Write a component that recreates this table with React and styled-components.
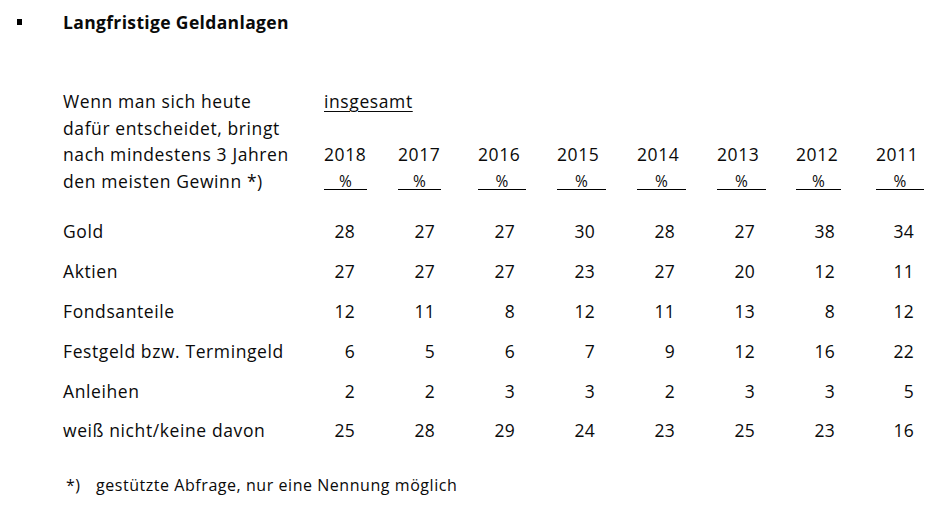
import React from 'react';
import styled, { createGlobalStyle } from 'styled-components';

const GlobalStyle = createGlobalStyle`
  body {
    margin: 0;
    background: #fff;
    color: #0a0a0a;
    font-family: "Open Sans", "Liberation Sans", sans-serif;
  }
`;

const COLS = '261px 74px 80px 79px 80px 80px 79px 80px 60px';

const Page = styled.div`
  width: 951px;
  height: 511px;
  padding: 8px 0 0 17px;
  box-sizing: border-box;
  overflow: hidden;
`;

const TitleRow = styled.div`
  display: flex;
  align-items: center;
  height: 28px;
`;

const Bullet = styled.span`
  width: 5px;
  height: 6px;
  background: #000;
  margin-right: 41px;
`;

const Title = styled.h1`
  margin: 0;
  font-size: 17.5px;
  font-weight: 700;
  letter-spacing: 0.35px;
`;

const Table = styled.div`
  margin: 52px 0 0 46px;
  display: grid;
  grid-template-columns: ${COLS};
  grid-template-rows: repeat(4, 26.6px) 18px repeat(6, 39.8px);
  font-size: 17.5px;
  letter-spacing: 0.6px;
`;

const HeaderLabel = styled.div`
  grid-row: 1 / span 4;
  line-height: 26.6px;
  white-space: nowrap;
`;

const Overall = styled.div`
  grid-column: 2 / span 8;
  grid-row: 1;
  line-height: 26.6px;
  text-decoration: underline;
  text-underline-offset: 3px;
  text-decoration-thickness: 1px;
`;

const Year = styled.div`
  grid-row: 3;
  line-height: 26.6px;
`;

const Unit = styled.div`
  grid-row: 4;
  align-self: start;
  width: ${(p) => p.$w}px;
  height: 21px;
  line-height: 26px;
  font-size: 15.5px;
  letter-spacing: 0;
  text-align: center;
  border-bottom: 1px solid #000;
`;

const Label = styled.div`
  grid-column: 1;
  line-height: 39.8px;
  white-space: nowrap;
`;

const Cell = styled.div`
  width: ${(p) => p.$w}px;
  text-align: right;
  line-height: 39.8px;
  letter-spacing: 0.3px;
`;

const Footnote = styled.div`
  margin: 23px 0 0 49px;
  font-size: 16px;
  letter-spacing: 0.55px;
  display: flex;
`;

const Star = styled.span`
  width: 30px;
`;

const years = [2018, 2017, 2016, 2015, 2014, 2013, 2012, 2011];
const widths = [43, 43, 48, 49, 49, 49, 45, 48];
const numW = [31, 37, 37, 38, 38, 38, 39, 38];

const rows = [
  ['Gold', [28, 27, 27, 30, 28, 27, 38, 34]],
  ['Aktien', [27, 27, 27, 23, 27, 20, 12, 11]],
  ['Fondsanteile', [12, 11, 8, 12, 11, 13, 8, 12]],
  ['Festgeld bzw. Termingeld', [6, 5, 6, 7, 9, 12, 16, 22]],
  ['Anleihen', [2, 2, 3, 3, 2, 3, 3, 5]],
  ['weiß nicht/keine davon', [25, 28, 29, 24, 23, 25, 23, 16]],
];

export default function App() {
  return (
    <Page>
      <GlobalStyle />
      <TitleRow>
        <Bullet />
        <Title>Langfristige Geldanlagen</Title>
      </TitleRow>
      <Table>
        <HeaderLabel>
          Wenn man sich heute<br />
          dafür entscheidet, bringt<br />
          nach mindestens 3 Jahren<br />
          den meisten Gewinn *)
        </HeaderLabel>
        <Overall>insgesamt</Overall>
        {years.map((y, i) => (
          <Year key={y} style={{ gridColumn: i + 2 }}>{y}</Year>
        ))}
        {years.map((y, i) => (
          <Unit key={y} $w={widths[i]} style={{ gridColumn: i + 2 }}>%</Unit>
        ))}
        {rows.map(([name, vals], r) => (
          <React.Fragment key={name}>
            <Label style={{ gridRow: r + 6 }}>{name}</Label>
            {vals.map((v, i) => (
              <Cell key={i} $w={numW[i]} style={{ gridRow: r + 6, gridColumn: i + 2 }}>{v}</Cell>
            ))}
          </React.Fragment>
        ))}
      </Table>
      <Footnote>
        <Star>*)</Star>
        gestützte Abfrage, nur eine Nennung möglich
      </Footnote>
    </Page>
  );
}
